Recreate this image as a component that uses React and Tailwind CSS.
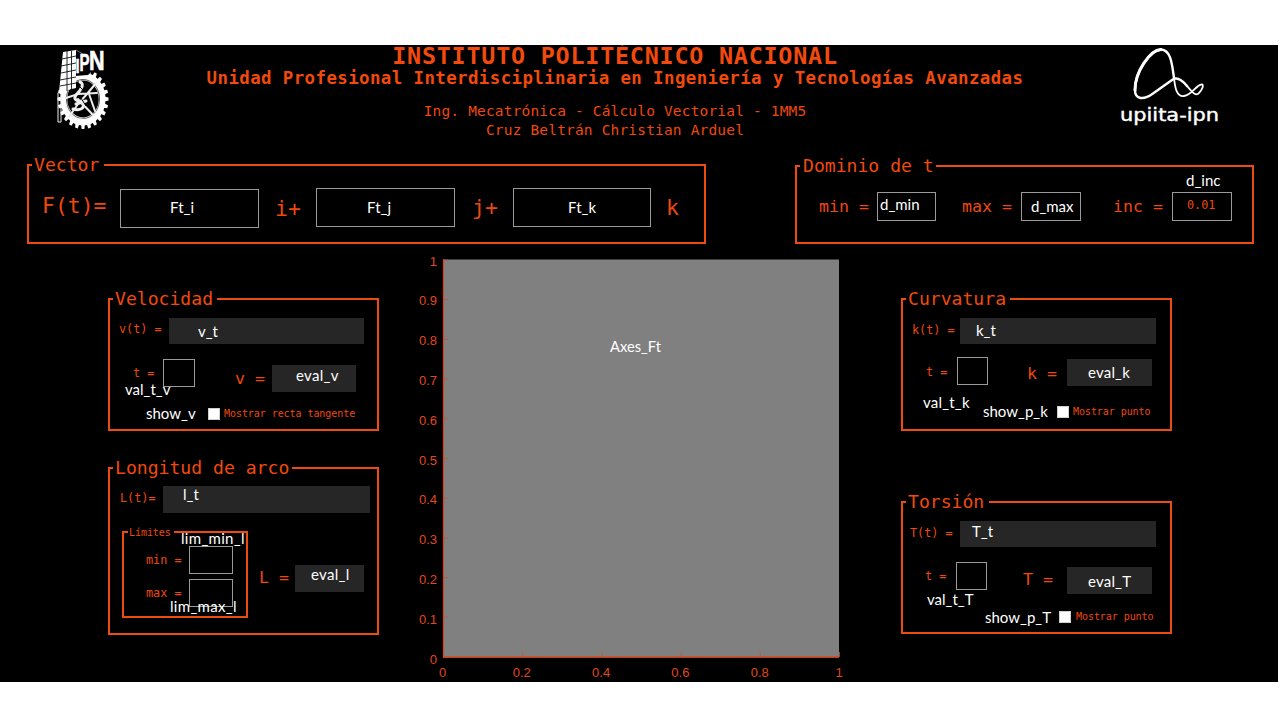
import React from "react";

const MONO = "font-['DejaVu_Sans_Mono',monospace] whitespace-pre leading-none shrink-0";

function Label({ className = "", children }) {
  return <div className={`${MONO} flex h-5 items-center pt-[2px] text-[#ee480c] ${className}`}>{children}</div>;
}

function Small({ className = "", children }) {
  return <Label className={`text-[11.8px] ${className}`}>{children}</Label>;
}

function Note({ className = "", children }) {
  return (
    <span className={`flex h-5 shrink-0 items-center whitespace-pre pb-[2px] font-['Lato',sans-serif] text-[15px] leading-none text-white ${className}`}>
      {children}
    </span>
  );
}

function Panel({ title, className = "", legend = "", children }) {
  return (
    <fieldset className={`border-2 border-[#ec4c10] ${className}`}>
      <legend className={`${MONO} ml-[3px] h-5 pt-px text-[18.1px] text-[#f04a0c] ${legend}`}>
        {title}
      </legend>
      {children}
    </fieldset>
  );
}

function Box({ className = "", children }) {
  return <div className={`relative flex shrink-0 border border-[#9a9a9a] ${className}`}>{children}</div>;
}

function Readout({ className = "", children }) {
  return <div className={`flex shrink-0 bg-[#262626] ${className}`}>{children}</div>;
}

function Check({ className = "" }) {
  return <div className={`size-3 shrink-0 border border-[#cfcfcf] bg-white ${className}`} />;
}

function IpnLogo() {
  const teeth = Array.from({ length: 24 }, (_, i) => i * 15);
  return (
    <svg className="ml-[54px] mt-[3px] shrink-0" width="58" height="86" viewBox="0 0 58 86">
      <g transform="translate(29 51) scale(0.85 1)">
        {teeth.map((a) => (
          <path key={a} d="M-2.4 -25 L-1.6 -30 L1.6 -30 L2.4 -25Z" fill="#fff" transform={`rotate(${a})`} />
        ))}
        <circle r="22.500" fill="none" stroke="#fff" strokeWidth="8" />
        <circle r="19.500" fill="none" stroke="#222" strokeWidth="0.8" />
      </g>
      <path d="M21 2 H51 V22 L46 24 L37 24 L34 27 L21 28Z" fill="#000" />
      <path d="M9 4 L22 2 V40 L5 44Z" fill="#fff" />
      <path d="M13 3 V43 M17.500 3 V42 M8 11 L22 8 M7 18 L22 15 M7 25 L22 22 M6 32 L22 29 M6 38 L22 35" stroke="#111" strokeWidth="0.9" fill="none" />
      <path d="M22 2 L29 6 V9" stroke="#888" strokeWidth="0.8" fill="none" />
      <g fill="#fff" stroke="#fff" strokeWidth="0.6" fontFamily="Liberation Sans, sans-serif" fontWeight="700">
        <text transform="translate(21.500 25) scale(0.7 1)" fontSize="21">I</text>
        <text transform="translate(25.500 23) scale(0.65 1)" fontSize="23">P</text>
        <text transform="translate(35 22) scale(0.8 1)" fontSize="27">N</text>
      </g>
      <g fill="none" stroke="#eee" strokeLinecap="round">
        <path d="M12 50 L24 46 L43 45 M15 69 L24 56 L33 46 L42 35 M24 51 L40 68 M35 46 L41 63" strokeWidth="2" />
        <path d="M4 45 V74 H7 V46 M12 56 C12 66 20 72 29 71" strokeWidth="1" />
        <path d="M26 34 C31 36 27 42 22 47 C18 53 26 53 29 56 C31 60 26 63 19 61 M22 56 L32 53" strokeWidth="3" />
      </g>
      <path d="M24 37 L30 43 M25 47 L32 58" stroke="#000" strokeWidth="1" />
    </svg>
  );
}

function UpiitaLogo() {
  return (
    <svg className="mt-px shrink-0" width="110" height="84" viewBox="0 0 110 84">
      <g fill="none" stroke="#fff" strokeLinecap="round" strokeLinejoin="round">
        <path d="M59 32 C57 18 56 4 46 3.5 C35 4 20 26 20 44 C20 54 29 54 38 47.5 L57 34 C62 30 67 34 72 40" strokeWidth="2.4" />
        <path d="M46 3.5 C35 4 20 26 20 44" strokeWidth="3" />
        <path d="M72 40 C77 46 81 51 84 47 C88 43 89 38 86.500 38.500 C81 39 77 49 69 50 C61 51 60 40 59 32" strokeWidth="1.8" />
      </g>
      <text x="5" y="75" fill="#fff" stroke="#fff" strokeWidth="0.4" fontFamily="DejaVu Sans, sans-serif" fontSize="17.500" textLength="99" lengthAdjust="spacingAndGlyphs">
        upiita-ipn
      </text>
    </svg>
  );
}

function Axes() {
  const ys = ["1", "0.9", "0.8", "0.7", "0.6", "0.5", "0.4", "0.3", "0.2", "0.1", "0"];
  const xs = ["0", "0.2", "0.4", "0.6", "0.8", "1"];
  return (
    <svg className="ml-[31px] mt-[6px] shrink-0" width="440" height="431" viewBox="410 250 440 431">
      <rect x="443" y="259.500" width="396" height="398" fill="#808080" />
      <path d="M443.500 259.500 V657 H839" fill="none" stroke="#d9481b" strokeWidth="1.300" />
      <g fill="#e0481a" fontFamily="Liberation Sans, sans-serif" fontSize="13">
        {ys.map((t, i) => (
          <g key={t}>
            <path d={`M443 ${260 + i * 39.7} h5`} stroke="#c05636" strokeWidth="0.8" />
            <text x="437" y={265.5 + i * 39.8} textAnchor="end">{t}</text>
          </g>
        ))}
        {xs.map((t, i) => (
          <g key={t}>
            <path d={`M${443.500 + i * 79.2} 657 v-5`} stroke="#c05636" strokeWidth="0.8" />
            <text x={442.500 + i * 79.3} y="676.500" textAnchor="middle">{t}</text>
          </g>
        ))}
      </g>
      <text x="610" y="351.500" fill="#fff" fontFamily="Lato, sans-serif" fontSize="15" textLength="51" lengthAdjust="spacingAndGlyphs">Axes_Ft</text>
    </svg>
  );
}

export default function App() {
  return (
    <div className="h-[720px] w-[1280px] overflow-hidden bg-white pt-[45px]">
      <main className="flex h-[637px] w-[1278px] flex-col overflow-hidden bg-black">
        <header className="flex h-[110px] shrink-0">
          <IpnLogo />
          <div className="ml-[93px] flex w-[820px] shrink-0 flex-col items-center">
            <h1 className={`${MONO} h-[23px] text-[23.4px] font-bold tracking-[0.77px] text-[#f24a0c]`}>
              INSTITUTO POLITÉCNICO NACIONAL
            </h1>
            <h2 className={`${MONO} h-5 pt-[2px] text-[17.4px] font-bold tracking-[0.42px] text-[#f24a0c]`}>
              Unidad Profesional Interdisciplinaria en Ingeniería y Tecnologías Avanzadas
            </h2>
            <Label className="mt-[12px] text-[14.5px] tracking-[0.17px]">Ing. Mecatrónica - Cálculo Vectorial - 1MM5</Label>
            <Label className="-mt-px text-[14.5px] tracking-[0.17px]">Cruz Beltrán Christian Arduel</Label>
          </div>
          <div className="ml-[90px]">
            <UpiitaLogo />
          </div>
        </header>

        <section className="flex h-[89px] shrink-0 items-start">
          <Panel title="Vector" className="ml-[27px] h-[89px] w-[679px] shrink-0" legend="w-[72px] pl-[2px]">
            <div className="flex items-start text-[21.4px]">
              <Label className="ml-[13px] mt-5 w-[78px]">F(t)=</Label>
              <Box className="mt-[14px] h-[39px] w-[139px]">
                <Note className="ml-[49px] mt-2">Ft_i</Note>
              </Box>
              <Label className="ml-4 mt-[23px] w-[41px]">i+</Label>
              <Box className="mt-[13px] h-[39px] w-[139px]">
                <Note className="ml-[50px] mt-[9px]">Ft_j</Note>
              </Box>
              <Label className="ml-[17px] mt-[22px] w-[41px]">j+</Label>
              <Box className="mt-[13px] h-[39px] w-[138px]">
                <Note className="ml-[54px] mt-[9px]">Ft_k</Note>
              </Box>
              <Label className="ml-[15px] mt-[22px]">k</Label>
            </div>
          </Panel>

          <Panel title="Dominio de t" className="ml-[89px] mt-px h-[88px] w-[459px] shrink-0" legend="w-[136px] pl-[3px]">
            <div className="flex items-start text-[16.6px]">
              <Label className="ml-[22px] mt-5 w-[58px]">min =</Label>
              <Box className="mt-4 h-[29px] w-[59px]">
                <Note className="ml-[2px] mt-[2px]">d_min</Note>
              </Box>
              <Label className="ml-[26px] mt-5 w-[59px]">max =</Label>
              <Box className="mt-4 h-[29px] w-[60px]">
                <Note className="ml-[9px] mt-[4px]">d_max</Note>
              </Box>
              <Label className="ml-8 mt-5 w-[59px]">inc =</Label>
              <Box className="mt-4 h-[29px] w-[60px]">
                <Small className="ml-[14px] mt-[2px]">0.01</Small>
                <Note className="absolute -top-[22px] left-[13px]">d_inc</Note>
              </Box>
            </div>
          </Panel>
        </section>

        <section className="flex min-h-0 flex-1 items-start">
          <div className="ml-[108px] flex w-[271px] shrink-0 flex-col pt-[45px]">
            <Panel title="Velocidad" className="h-[142px] w-[271px]" legend="w-[104px] pl-[2px]">
              <div className="mt-[9px] flex items-start">
                <Small className="ml-[9px] mt-px w-[50px]">v(t) =</Small>
                <Readout className="h-[26px] w-[195px]">
                  <Note className="ml-[29px] mt-[4px]">v_t</Note>
                </Readout>
              </div>
              <div className="mt-[15px] flex h-[34px] items-start">
                <Small className="ml-[23px] mt-[4px] w-[30px]">t =</Small>
                <Box className="h-7 w-[32px]">
                  <Note className="absolute -left-[39px] top-[20px]">val_t_v</Note>
                </Box>
                <Label className="ml-10 mt-[9px] w-[37px] text-[16.600px]">v =</Label>
                <Readout className="mt-[6px] h-[27px] w-[84px]">
                  <Note className="ml-6 mt-px tracking-[0.3px]">eval_v</Note>
                </Readout>
              </div>
              <div className="mt-[11px] flex items-start">
                <Note className="ml-9 w-[62px]">show_v</Note>
                <Check className="mt-[4px]" />
                <Label className="ml-[4px] -mt-px text-[10px] tracking-[-0.06px]">Mostrar recta tangente</Label>
              </div>
            </Panel>

            <Panel title="Longitud de arco" className="mt-[27px] h-[177px] w-[271px]" legend="w-[179px] pl-[2px]">
              <div className="mt-[8px] flex items-start">
                <Small className="ml-[10px] mt-[2px] w-[43px]">L(t)=</Small>
                <Readout className="h-[27px] w-[207px]">
                  <Note className="ml-5 -mt-px">l_t</Note>
                </Readout>
              </div>
              <div className="mt-[12px] flex items-start">
                <fieldset className="ml-3 h-[93px] w-[126px] shrink-0 border-2 border-[#ec4c10]">
                  <legend className={`${MONO} ml-[4px] h-[14px] w-[46px] pl-px pt-[3px] text-[10px] tracking-[-0.06px] text-[#ee480c]`}>Límites</legend>
                  <div className="mt-[7px] flex items-start">
                    <Small className="ml-[22px] mt-[4px] w-[43px]">min =</Small>
                    <Box className="h-7 w-11">
                      <Note className="absolute -left-[9px] -top-[18px] tracking-[0.3px]">lim_min_l</Note>
                    </Box>
                  </div>
                  <div className="mt-[5px] flex items-start">
                    <Small className="ml-[22px] mt-[4px] w-[43px]">max =</Small>
                    <Box className="h-7 w-11">
                      <Note className="absolute -left-[20px] top-[17px] tracking-[0.3px]">lim_max_l</Note>
                    </Box>
                  </div>
                </fieldset>
                <Label className="ml-[11px] mt-[42px] w-[36px] text-[16.600px]">L =</Label>
                <Readout className="mt-10 h-[27px] w-[69px]">
                  <Note className="ml-4 tracking-[0.3px]">eval_l</Note>
                </Readout>
              </div>
            </Panel>
          </div>

          <Axes />

          <div className="ml-[51px] flex w-[271px] shrink-0 flex-col pt-[45px]">
            <Panel title="Curvatura" className="h-[142px] w-[271px]" legend="w-[104px] pl-[2px]">
              <div className="mt-[9px] flex items-start">
                <Small className="ml-[9px] mt-[2px] w-[48px]">k(t) =</Small>
                <Readout className="h-[26px] w-[196px]">
                  <Note className="ml-4 mt-[3px]">k_t</Note>
                </Readout>
              </div>
              <div className="mt-[13px] flex h-[34px] items-start">
                <Small className="ml-[23px] mt-[5px] w-[31px]">t =</Small>
                <Box className="h-7 w-[31px]">
                  <Note className="absolute -left-[35px] top-[35px] tracking-[0.2px]">val_t_k</Note>
                </Box>
                <Label className="ml-[39px] mt-[6px] w-[40px] text-[16.600px]">k =</Label>
                <Readout className="mt-[2px] h-[27px] w-[85px]">
                  <Note className="ml-[21px] mt-[4px] tracking-[0.2px]">eval_k</Note>
                </Readout>
              </div>
              <div className="mt-[11px] flex items-start">
                <Note className="ml-20 w-[74px]">show_p_k</Note>
                <Check className="mt-[4px]" />
                <Label className="ml-[4px] -mt-px text-[10px] tracking-[-0.06px]">Mostrar punto</Label>
              </div>
            </Panel>

            <Panel title="Torsión" className="mt-[61px] h-[142px] w-[271px]" legend="w-[83px] pl-[2px]">
              <div className="mt-[9px] flex items-start">
                <Small className="ml-[7px] mt-[2px] w-[50px]">T(t) =</Small>
                <Readout className="h-[26px] w-[196px]">
                  <Note className="ml-3 mt-px">T_t</Note>
                </Readout>
              </div>
              <div className="mt-[15px] flex h-[34px] items-start">
                <Small className="ml-[22px] mt-[4px] w-[31px]">t =</Small>
                <Box className="h-7 w-[31px]">
                  <Note className="absolute -left-[30px] top-[27px]">val_t_T</Note>
                </Box>
                <Label className="ml-9 mt-[7px] w-[44px] text-[16.600px]">T =</Label>
                <Readout className="mt-[5px] h-[27px] w-[85px]">
                  <Note className="ml-[21px] mt-[5px] tracking-[0.2px]">eval_T</Note>
                </Readout>
              </div>
              <div className="mt-[11px] flex items-start">
                <Note className="ml-[82px] mt-px w-[74px]">show_p_T</Note>
                <Check className="mt-[4px]" />
                <Label className="ml-[5px] -mt-px text-[10px] tracking-[-0.06px]">Mostrar punto</Label>
              </div>
            </Panel>
          </div>
        </section>
      </main>
    </div>
  );
}
